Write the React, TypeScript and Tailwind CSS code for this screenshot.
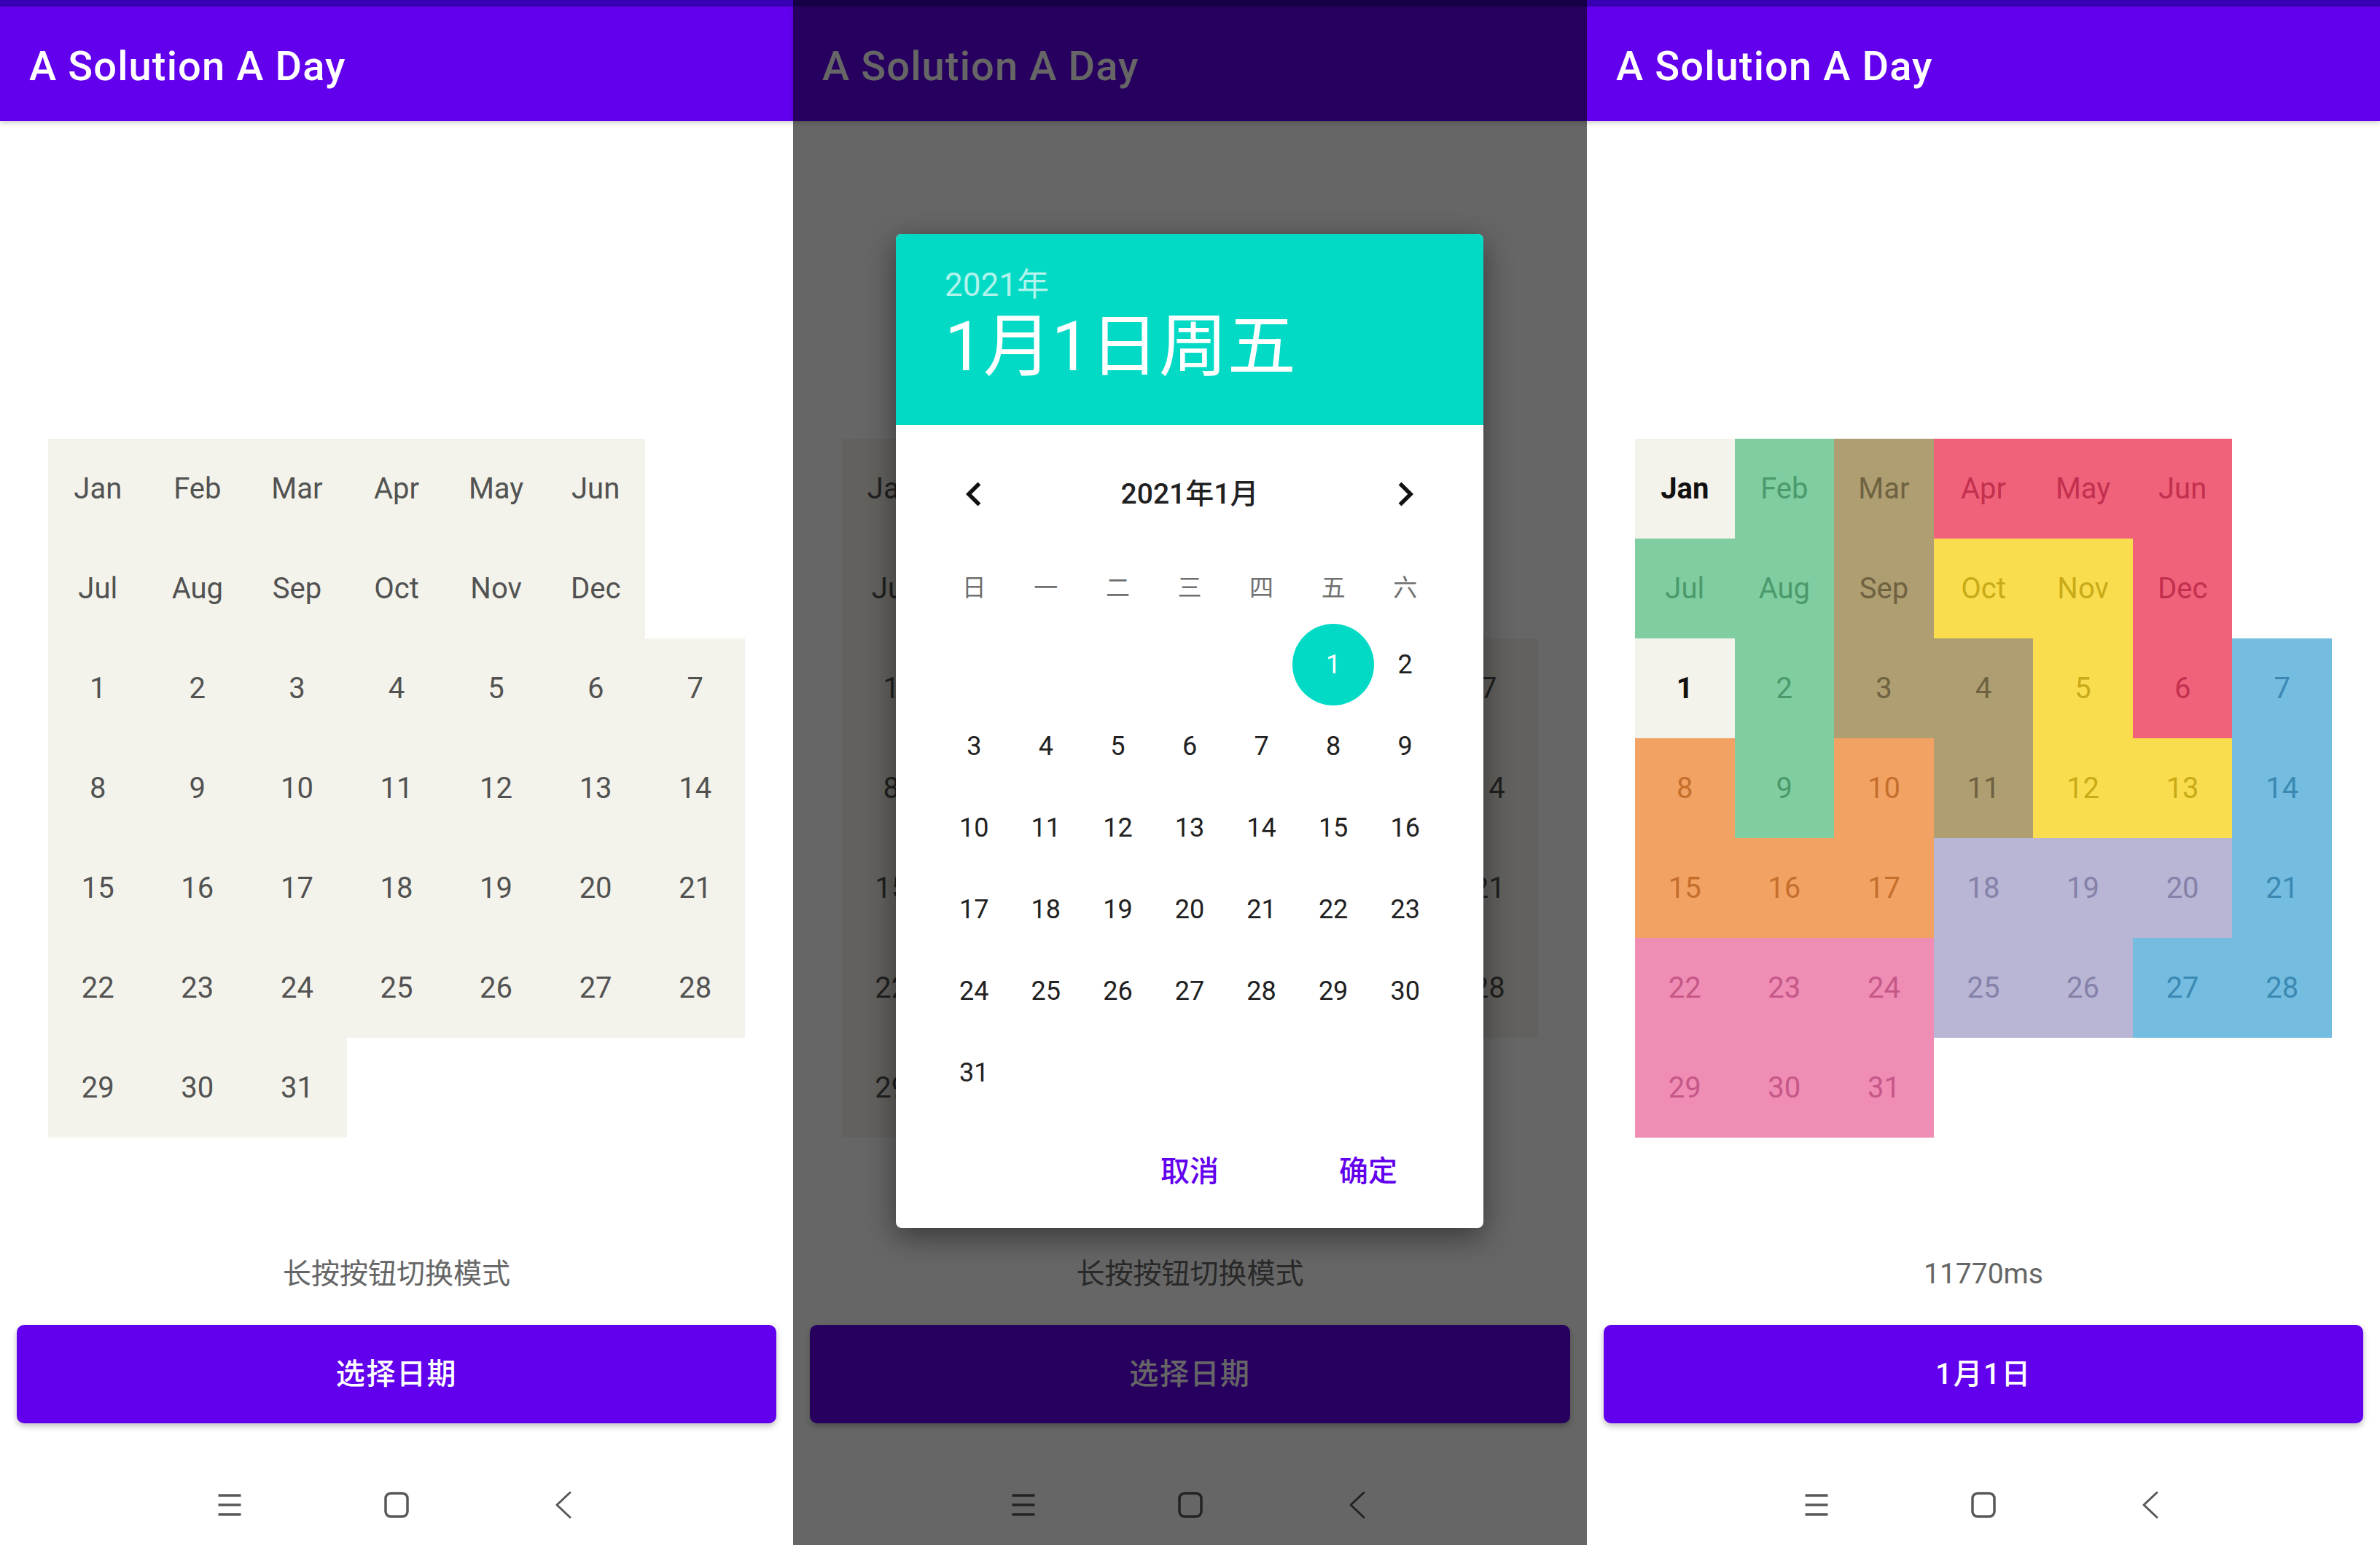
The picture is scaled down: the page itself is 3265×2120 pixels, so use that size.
import clsx from 'clsx';

// Labels of the puzzle board, row by row (null = no cell)
const LABELS: (string | null)[][] = [
  ['Jan', 'Feb', 'Mar', 'Apr', 'May', 'Jun', null],
  ['Jul', 'Aug', 'Sep', 'Oct', 'Nov', 'Dec', null],
  ['1', '2', '3', '4', '5', '6', '7'],
  ['8', '9', '10', '11', '12', '13', '14'],
  ['15', '16', '17', '18', '19', '20', '21'],
  ['22', '23', '24', '25', '26', '27', '28'],
  ['29', '30', '31', null, null, null, null],
];

// Piece letters of the solved board for Jan 1
const SOLUTION = [
  'BGTRRR.',
  'GGTYYR.',
  'BGTTYRL',
  'OGOTYYL',
  'OOOVVVL',
  'PPPVVLL',
  'PPP....',
];

const PIECE_STYLE: Record<string, string> = {
  B: 'bg-[#F4F3EB] text-[#111111] font-bold',
  G: 'bg-[#7FCDA0] text-[#4C9A6C]',
  T: 'bg-[#AE9E72] text-[#6F6240]',
  R: 'bg-[#EF627A] text-[#C3304F]',
  Y: 'bg-[#FADD4F] text-[#C9AB18]',
  L: 'bg-[#74BDE0] text-[#3B89B3]',
  O: 'bg-[#F2A263] text-[#C56F2C]',
  V: 'bg-[#B8B5D5] text-[#8581A8]',
  P: 'bg-[#EF8DB4] text-[#C55888]',
};

const WEEKDAYS = ['日', '一', '二', '三', '四', '五', '六'];

// January 2021 starts on a Friday
const DAYS: (number | null)[] = [
  null, null, null, null, null, 1, 2,
  ...Array.from({ length: 29 }, (_, i) => i + 3),
];

function Board({ solved, covered }: { solved: boolean; covered: boolean }) {
  return (
    <div className="mx-auto mt-[436px] grid w-[956px] grid-cols-7">
      {LABELS.flatMap((row, r) =>
        row.map((label, c) => {
          if (!label) return <div key={`${r}-${c}`} className="h-[137px]" />;
          const style = solved ? PIECE_STYLE[SOLUTION[r][c]] : 'bg-[#F4F3EB] text-[#525252]';
          // middle columns sit fully under the dialog when it is open
          const hidden = covered && c > 0 && c < 6;
          return (
            <div
              key={`${r}-${c}`}
              className={clsx('flex h-[137px] items-center justify-center text-[40px] leading-none', style)}
            >
              {!hidden && label}
            </div>
          );
        })
      )}
    </div>
  );
}

function NavBar() {
  return (
    <div className="flex h-[110px] items-center justify-center gap-[181px] text-[#585858]">
      <svg width="48" height="48" viewBox="0 0 48 48" fill="none" stroke="currentColor" strokeWidth="3.5">
        <path d="M8.5 11h31M8.5 24h31M8.5 37h31" />
      </svg>
      <svg width="48" height="48" viewBox="0 0 48 48" fill="none" stroke="currentColor" strokeWidth="3.5">
        <rect x="9" y="8" width="30" height="32" rx="7" />
      </svg>
      <svg width="48" height="48" viewBox="0 0 48 48" fill="none" stroke="currentColor" strokeWidth="3" strokeLinecap="round" strokeLinejoin="round">
        <path d="M33 7L15 24l18 17" />
      </svg>
    </div>
  );
}

function DatePickerDialog() {
  return (
    <div className="absolute left-[141px] top-[321px] z-30 h-[1364px] w-[806px] overflow-hidden rounded-[8px] bg-white shadow-[0_12px_40px_rgba(0,0,0,0.45)]">
      {/* Header */}
      <div className="h-[262px] bg-[#03DAC5] pl-[67px] pt-[48px]">
        <div className="text-[44px] leading-none text-white/70">2021年</div>
        <div className="mt-[16px] text-[94px] leading-none text-white">1月1日周五</div>
      </div>

      <div className="mx-auto w-[690px]">
        {/* Month switcher */}
        <div className="mt-[40px] grid h-[110px] grid-cols-7 items-center">
          <div className="flex justify-center">
            <svg width="66" height="66" viewBox="0 0 24 24" fill="#111111">
              <path d="M15.41 7.41L14 6l-6 6 6 6 1.41-1.41L10.83 12z" />
            </svg>
          </div>
          <div className="col-span-5 text-center text-[39px] font-medium leading-none text-[#212121]">2021年1月</div>
          <div className="flex justify-center">
            <svg width="66" height="66" viewBox="0 0 24 24" fill="#111111">
              <path d="M10 6L8.59 7.41 13.17 12l-4.58 4.59L10 18l6-6z" />
            </svg>
          </div>
        </div>

        {/* Week header */}
        <div className="mt-[23px] grid h-[100px] grid-cols-7 items-center">
          {WEEKDAYS.map((d) => (
            <div key={d} className="text-center text-[33px] leading-none text-[#707070]">
              {d}
            </div>
          ))}
        </div>

        {/* Days */}
        <div className="grid grid-cols-7">
          {DAYS.map((d, i) => (
            <div key={i} className="flex h-[112px] items-center justify-center">
              {d === 1 ? (
                <div className="flex h-[112px] w-[112px] shrink-0 items-center justify-center rounded-full bg-[#03DAC5] text-[36px] leading-none text-white">
                  1
                </div>
              ) : (
                d && <span className="text-[36px] leading-none text-[#212121]">{d}</span>
              )}
            </div>
          ))}
        </div>
      </div>

      {/* Actions */}
      <div className="mt-[30px] flex h-[100px] items-center justify-end gap-[69px] pr-[70px]">
        <div className="w-[176px] text-center text-[40px] font-medium leading-none text-[#6200EE]">取消</div>
        <div className="w-[176px] text-center text-[40px] font-medium leading-none text-[#6200EE]">确定</div>
      </div>
    </div>
  );
}

function Phone({
  width,
  caption,
  button,
  solved = false,
  dialog = false,
}: {
  width: string;
  caption: string;
  button: string;
  solved?: boolean;
  dialog?: boolean;
}) {
  return (
    <section className={clsx('relative flex shrink-0 flex-col bg-white', width)}>
      <div className="h-[9px] bg-[#3700B3]" />
      <header className="relative z-10 flex h-[157px] items-center bg-[#6200EE] pl-[40px] pt-[6px] shadow-[0_3px_6px_rgba(0,0,0,0.18)]">
        <span className="text-[56px] font-medium leading-none tracking-[0.02em] text-white">A Solution A Day</span>
      </header>

      <Board solved={solved} covered={dialog} />

      <p className="mt-[159px] flex h-[56px] items-center justify-center text-[39px] leading-none text-[#666666]">
        {caption}
      </p>

      <div className="mx-[23px] mt-[42px] flex h-[135px] items-center justify-center rounded-[10px] bg-[#6200EE] text-[40px] font-medium leading-none tracking-[0.04em] text-white shadow-[0_4px_8px_rgba(0,0,0,0.25)]">
        {button}
      </div>

      <div className="mt-[57px]">
        <NavBar />
      </div>

      {dialog && (
        <>
          <div className="absolute inset-0 z-20 bg-black/60" />
          <DatePickerDialog />
        </>
      )}
    </section>
  );
}

export default function App() {
  return (
    <div className="flex h-[2120px] w-[3265px] overflow-hidden bg-white font-['Roboto','Noto_Sans_CJK_SC',sans-serif]">
      <Phone width="w-[1088px]" caption="长按按钮切换模式" button="选择日期" />
      <Phone width="w-[1089px]" caption="长按按钮切换模式" button="选择日期" dialog />
      <Phone width="w-[1088px]" caption="11770ms" button="1月1日" solved />
    </div>
  );
}
